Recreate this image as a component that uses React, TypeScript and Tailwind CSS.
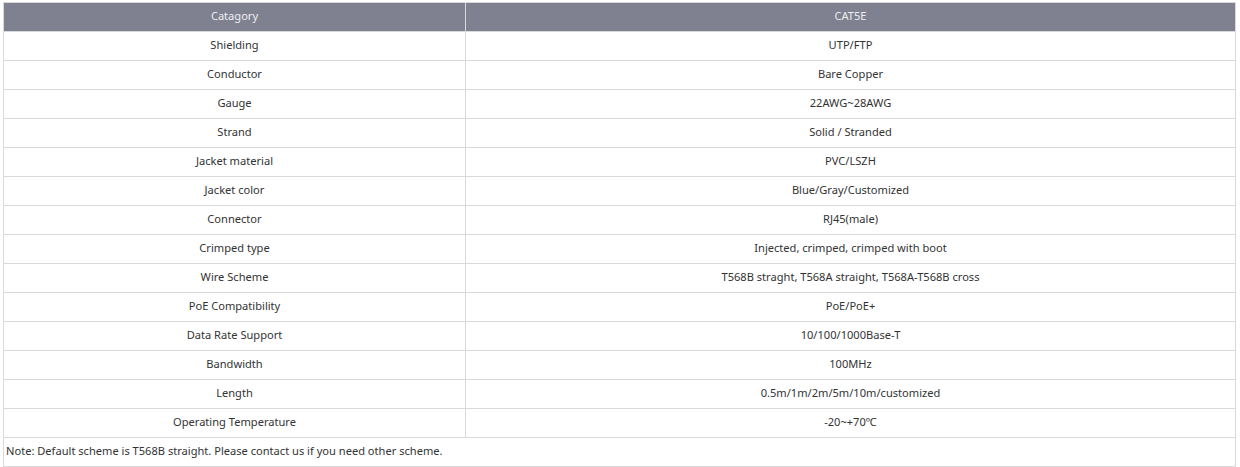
import React from "react";

const rows: [string, string][] = [
  ["Shielding", "UTP/FTP"],
  ["Conductor", "Bare Copper"],
  ["Gauge", "22AWG~28AWG"],
  ["Strand", "Solid / Stranded"],
  ["Jacket material", "PVC/LSZH"],
  ["Jacket color", "Blue/Gray/Customized"],
  ["Connector", "RJ45(male)"],
  ["Crimped type", "Injected, crimped, crimped with boot"],
  ["Wire Scheme", "T568B straght, T568A straight, T568A-T568B cross"],
  ["PoE Compatibility", "PoE/PoE+"],
  ["Data Rate Support", "10/100/1000Base-T"],
  ["Bandwidth", "100MHz"],
  ["Length", "0.5m/1m/2m/5m/10m/customized"],
  ["Operating Temperature", "-20~+70℃"],
];

export default function App() {
  return (
    <div className="bg-white w-[1240px] h-[467px] pt-[2px] pl-[3px]" style={{ fontFamily: '"Noto Sans", "Open Sans", sans-serif' }}>
      <table className="border-collapse w-[1233px] text-[11.1px] text-[#333333] table-fixed">
        <colgroup>
          <col className="w-[462px]" />
          <col />
        </colgroup>
        <thead>
          <tr className="bg-[#7f8191] text-[#eeeef2]">
            <th className="border border-[#d9d9d9] h-[29px] font-normal text-center pt-0 px-0 pb-[2px]">Catagory</th>
            <th className="border border-[#d9d9d9] h-[29px] font-normal text-center pt-0 px-0 pb-[2px]">CAT5E</th>
          </tr>
        </thead>
        <tbody>
          {rows.map(([a, b]) => (
            <tr key={a}>
              <td className="border border-[#d9d9d9] h-[29px] text-center pt-0 px-0 pb-[2px]">{a}</td>
              <td className="border border-[#d9d9d9] h-[29px] text-center pt-0 px-0 pb-[2px]">{b}</td>
            </tr>
          ))}
          <tr>
            <td colSpan={2} className="border border-[#d9d9d9] h-[29px] text-left pt-0 pb-[2px] px-[2px]">
              Note: Default scheme is T568B straight. Please contact us if you need other scheme.
            </td>
          </tr>
        </tbody>
      </table>
    </div>
  );
}
